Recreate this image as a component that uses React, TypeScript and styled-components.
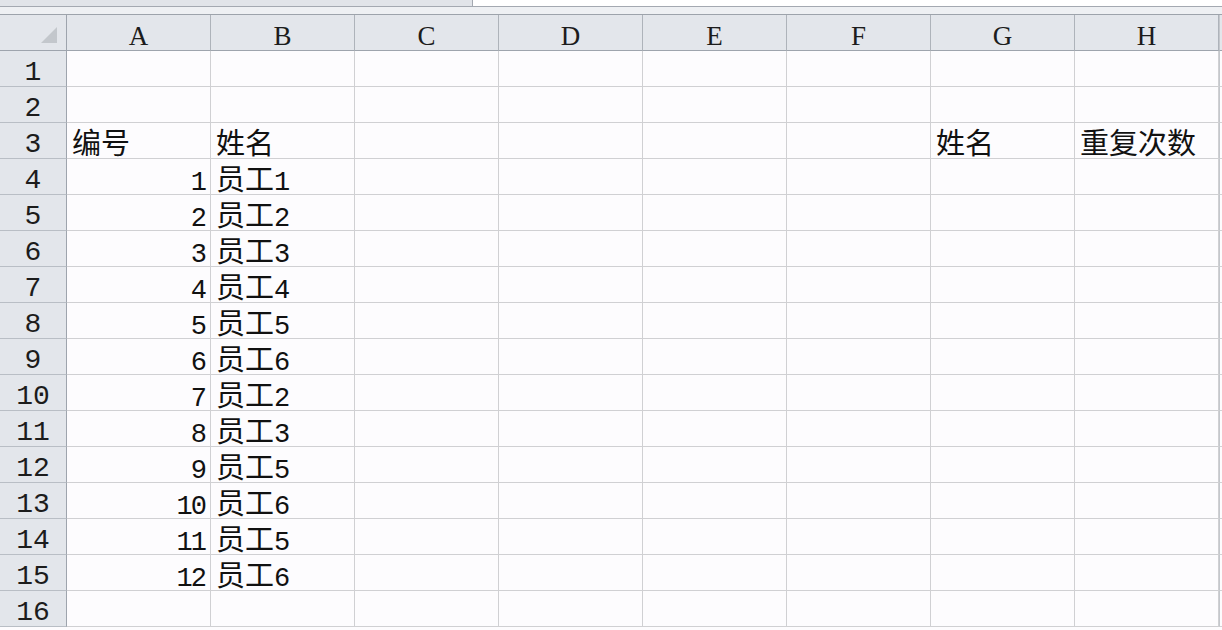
import styled, { createGlobalStyle } from "styled-components";

const GlobalStyle = createGlobalStyle`
  html, body {
    margin: 0;
    padding: 0;
    background: #fdfcfe;
    overflow: hidden;
  }
  body {
    font-family: "Noto Sans CJK SC", sans-serif;
  }
`;

const COLS = ["A", "B", "C", "D", "E", "F", "G", "H"];

type CellData = { text: string; align?: "left" | "right" };

// sheet content, keyed by row number then column letter
const DATA: Record<number, Record<string, CellData>> = {
  3: {
    A: { text: "编号" },
    B: { text: "姓名" },
    G: { text: "姓名" },
    H: { text: "重复次数" },
  },
};

const names = ["员工1", "员工2", "员工3", "员工4", "员工5", "员工6", "员工2", "员工3", "员工5", "员工6", "员工5", "员工6"];
names.forEach((n, i) => {
  DATA[i + 4] = {
    A: { text: String(i + 1), align: "right" },
    B: { text: n },
  };
});

const Page = styled.div`
  width: 1222px;
  height: 630px;
  display: flex;
  flex-direction: column;
  background: #fdfcfe;
`;

const TopStrip = styled.div`
  display: flex;
  height: 6px;
  border-bottom: 1px solid #a4a9b1;
`;

const NameBox = styled.div`
  width: 472px;
  background: #e1e4e9;
`;

const FormulaBox = styled.div`
  flex: 1;
  background: #ffffff;
  border-left: 1px solid #a4a9b1;
`;

const Ribbon = styled.div`
  height: 7px;
  background: #eef0f3;
  border-bottom: 1px solid #9da3ab;
`;

const Sheet = styled.div`
  display: grid;
  grid-template-columns: 67px repeat(8, 144px) 1fr;
  grid-auto-rows: 36px;
`;

const Corner = styled.div`
  background: #e3e6eb;
  border-right: 1px solid #9ea4ad;
  border-bottom: 1px solid #9ea4ad;
  display: flex;
  align-items: flex-end;
  justify-content: flex-end;
  padding: 0 9px 7px 0;
`;

const ColHead = styled.div`
  background: #e3e6eb;
  border-right: 1px solid #aeb3ba;
  border-bottom: 1px solid #9ea4ad;
  display: flex;
  align-items: center;
  justify-content: center;
  font-family: "Liberation Serif", serif;
  font-size: 27px;
  line-height: 28px;
  color: #1c1c1c;
  padding-top: 7px;
`;

const EdgeCell = styled.div<{ $head?: boolean }>`
  background: ${(p) => (p.$head ? "#e3e6eb" : "#fdfcfe")};
  border-left: 1px solid #c4c7cc;
  border-bottom: 1px solid ${(p) => (p.$head ? "#9ea4ad" : "#d2d2d4")};
`;

const RowHead = styled.div`
  background: #e3e6eb;
  border-right: 1px solid #9ea4ad;
  border-bottom: 1px solid #b9bec5;
  display: flex;
  align-items: center;
  justify-content: center;
  font-family: "Liberation Mono", monospace;
  font-size: 28px;
  line-height: 28px;
  color: #1c1c1c;
  padding-top: 8px;
`;

const Cell = styled.div<{ $align?: "left" | "right" }>`
  border-right: 1px solid #d0d0d3;
  border-bottom: 1px solid #d0d0d3;
  display: flex;
  align-items: flex-end;
  justify-content: ${(p) => (p.$align === "right" ? "flex-end" : "flex-start")};
  padding: 0 ${(p) => (p.$align === "right" ? "5px" : "0")} 1px ${(p) => (p.$align === "right" ? "0" : "5px")};
  font-family: "Noto Sans CJK SC", sans-serif;
  font-size: 29px;
  color: #111111;
  white-space: nowrap;
  min-width: 0;
`;

const Line = styled.span`
  display: block;
  line-height: 32px;
  height: 32px;
`;

const Num = styled.span`
  font-family: "Liberation Mono", monospace;
  font-size: 27px;
  letter-spacing: -2px;
`;

function CellText({ text }: { text: string }) {
  // digits are drawn in the half-width latin face, as in the sheet
  const parts = text.split(/(\d+)/).filter(Boolean);
  return (
    <Line>
      {parts.map((p, i) => (/^\d+$/.test(p) ? <Num key={i}>{p}</Num> : <span key={i}>{p}</span>))}
    </Line>
  );
}

export default function App() {
  const rows = Array.from({ length: 16 }, (_, i) => i + 1);
  return (
    <Page>
      <GlobalStyle />
      <TopStrip>
        <NameBox />
        <FormulaBox />
      </TopStrip>
      <Ribbon />
      <Sheet>
        <Corner>
          <svg width="16" height="16" viewBox="0 0 16 16">
            <polygon points="16,0 16,16 0,16" fill="#c3c7cc" />
          </svg>
        </Corner>
        {COLS.map((c) => (
          <ColHead key={c}>{c}</ColHead>
        ))}
        <EdgeCell $head />
        {rows.map((r) => (
          <RowLine key={r} r={r} />
        ))}
      </Sheet>
    </Page>
  );
}

function RowLine({ r }: { r: number }) {
  const rowData = DATA[r] || {};
  return (
    <>
      <RowHead>{r}</RowHead>
      {COLS.map((c) => {
        const d = rowData[c];
        return (
          <Cell key={c} $align={d?.align}>
            {d ? <CellText text={d.text} /> : null}
          </Cell>
        );
      })}
      <EdgeCell />
    </>
  );
}
